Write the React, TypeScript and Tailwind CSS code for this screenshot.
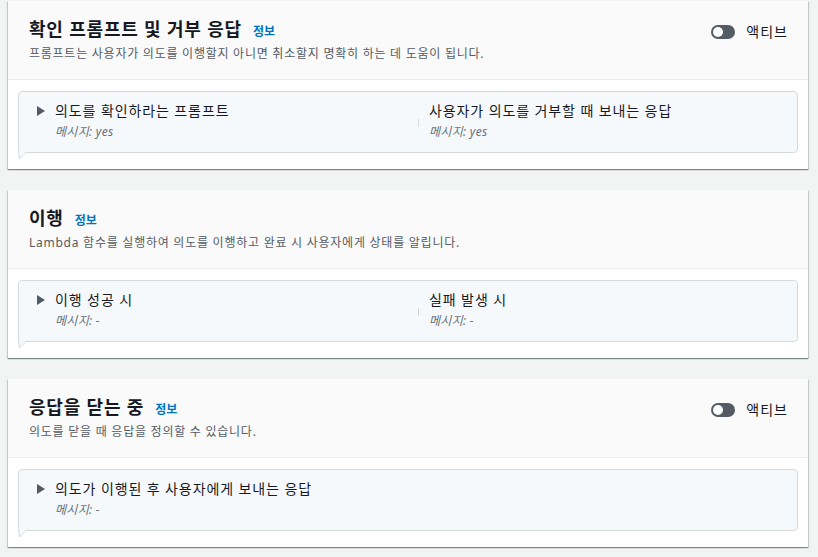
import React from "react";

type Item = { title: string; message: string };

type Section = {
  title: string;
  description: string;
  toggle: boolean;
  items: Item[];
};

const SECTIONS: Section[] = [
  {
    title: "확인 프롬프트 및 거부 응답",
    description:
      "프롬프트는 사용자가 의도를 이행할지 아니면 취소할지 명확히 하는 데 도움이 됩니다.",
    toggle: true,
    items: [
      { title: "의도를 확인하라는 프롬프트", message: "yes" },
      { title: "사용자가 의도를 거부할 때 보내는 응답", message: "yes" },
    ],
  },
  {
    title: "이행",
    description:
      "Lambda 함수를 실행하여 의도를 이행하고 완료 시 사용자에게 상태를 알립니다.",
    toggle: false,
    items: [
      { title: "이행 성공 시", message: "-" },
      { title: "실패 발생 시", message: "-" },
    ],
  },
  {
    title: "응답을 닫는 중",
    description: "의도를 닫을 때 응답을 정의할 수 있습니다.",
    toggle: true,
    items: [{ title: "의도가 이행된 후 사용자에게 보내는 응답", message: "-" }],
  },
];

function Toggle() {
  return (
    <div className="flex items-center gap-[11px] pt-[4px]">
      <div className="relative w-[24px] h-[14px] rounded-full bg-[#545b64]">
        <div className="absolute left-[2px] top-[2px] w-[10px] h-[10px] rounded-full bg-white" />
      </div>
      <span className="text-[14px] leading-[20px] tracking-[1px] text-[#16191f]">액티브</span>
    </div>
  );
}

function Caret() {
  return (
    <svg width="8" height="10" viewBox="0 0 8 10" className="shrink-0 mt-[5px]">
      <polygon points="0,0 8,5 0,10" fill="#545b64" />
    </svg>
  );
}

function ItemText({ item }: { item: Item }) {
  return (
    <div className="flex flex-col">
      <span className="text-[14px] leading-[20px] tracking-[0.9px] text-[#16191f]">
        {item.title}
      </span>
      <span className="text-[12px] leading-[16px] italic tracking-[0.3px] text-[#687078] mt-[3px]">
        메시지: {item.message}
      </span>
    </div>
  );
}

function ItemBox({ items }: { items: Item[] }) {
  return (
    <div className="relative border border-[#d5dbdb] rounded-[4px] bg-[#f6f9fc] pl-[18px] pt-[9px] pb-[12px] flex">
      <div className="w-[381px] flex gap-[10px]">
        <Caret />
        <ItemText item={items[0]} />
      </div>
      {items[1] && (
        <>
          <div className="w-px h-[8px] bg-[#d5dbdb] mt-[18px]" />
          <div className="pl-[10px]">
            <ItemText item={items[1]} />
          </div>
        </>
      )}
      <svg
        width="12"
        height="9"
        viewBox="0 0 12 9"
        className="absolute left-[-1px] top-[calc(100%-1px)]"
      >
        <polygon points="0.5,0 1.5,8 9,0" fill="#f6f9fc" />
        <polyline points="0.5,0 1.5,8 9,0.5" fill="none" stroke="#d5dbdb" strokeWidth="1" />
      </svg>
    </div>
  );
}

function Card({ section }: { section: Section }) {
  return (
    <div className="bg-white ml-2 mr-[10px] shadow-[0_1px_1px_0_rgba(0,28,36,0.3),1px_1px_1px_0_rgba(0,28,36,0.15),-1px_1px_1px_0_rgba(0,28,36,0.15)]">
      <div className="bg-[#fafafa] border-b border-[#eaeded] pl-[21px] pr-[20px] pt-[17px] pb-[17px] flex justify-between items-start">
        <div className="flex flex-col">
          <div className="flex items-baseline gap-[11px]">
            <h2 className="text-[18px] leading-[22px] font-bold tracking-[0.8px] text-[#16191f]">
              {section.title}
            </h2>
            <span className="text-[12px] font-bold text-[#0073bb]">정보</span>
          </div>
          <p className="text-[12px] leading-[16px] tracking-[0.75px] text-[#545b64] mt-[5px]">
            {section.description}
          </p>
        </div>
        {section.toggle && <Toggle />}
      </div>
      <div className="px-[10px] pt-[11px] pb-[16px]">
        <ItemBox items={section.items} />
      </div>
    </div>
  );
}

export default function App() {
  return (
    <main
      className="min-h-screen bg-[#f2f3f3] pt-px flex flex-col gap-[21px]"
      style={{ fontFamily: '"Noto Sans", "Noto Sans CJK KR", sans-serif' }}
    >
      {SECTIONS.map((s) => (
        <Card key={s.title} section={s} />
      ))}
    </main>
  );
}
